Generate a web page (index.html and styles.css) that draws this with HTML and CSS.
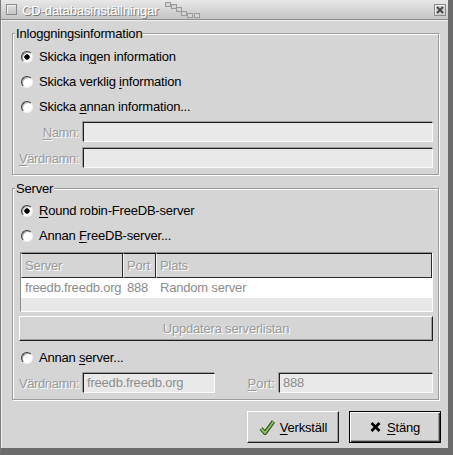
FILE: index.html
```html
<!DOCTYPE html>
<html lang="sv">
<head>
<meta charset="utf-8">
<title>CD-databasinställningar</title>
<link rel="stylesheet" href="styles.css">
</head>
<body>
<div class="window">
  <div class="titlebar">
    <span class="ticon"></span>
    <span class="ttext">CD-databasinställningar</span>
    <svg class="grip" width="40" height="17" viewBox="0 0 40 17">
      <g fill="#d4d4d4" stroke="#9a9a9a" stroke-width="1">
        <rect x="1.5" y="1.5" width="5" height="4"/>
        <rect x="7.5" y="3.5" width="5" height="4"/>
        <rect x="12.5" y="6.5" width="5" height="4"/>
        <rect x="17.5" y="10.5" width="5" height="4"/>
        <rect x="23.5" y="12.5" width="5" height="4"/>
        <rect x="30.5" y="12.5" width="5" height="4"/>
      </g>
    </svg>
    <span class="close">
      <svg width="8" height="8" viewBox="0 0 8 8"><path d="M1 1 L7 7 M7 1 L1 7" stroke="#4a4a4a" stroke-width="2"/></svg>
    </span>
  </div>
  <div class="client">
    <fieldset class="frame frame-login">
      <legend>Inloggningsinformation</legend>
      <div class="opt"><span class="radio on"></span><span>Skicka in<u>g</u>en information</span></div>
      <div class="opt"><span class="radio"></span><span>Skicka verklig <u>i</u>nformation</span></div>
      <div class="opt"><span class="radio"></span><span>Skicka <u>a</u>nnan information...</span></div>
      <div class="row row-first"><span class="lab dis"><span><u>N</u>amn:</span></span><span class="entry"></span></div>
      <div class="row row-next"><span class="lab dis"><span><u>V</u>ärdnamn:</span></span><span class="entry"></span></div>
    </fieldset>
    <fieldset class="frame frame-server">
      <legend>Server</legend>
      <div class="opt"><span class="radio on"></span><span><u>R</u>ound robin-FreeDB-server</span></div>
      <div class="opt"><span class="radio"></span><span>Annan <u>F</u>reeDB-server...</span></div>
      <div class="list">
        <div class="lhead">
          <span class="hc c1">Server</span><span class="hc c2">Port</span><span class="hc c3">Plats</span>
        </div>
        <div class="lrow">
          <span class="rc c1">freedb.freedb.org</span><span class="rc c2">888</span><span class="rc c3">Random server</span>
        </div>
      </div>
      <div class="wbtn dis">Uppdatera serverlistan</div>
      <div class="opt opt-spaced"><span class="radio"></span><span>Annan <u>s</u>erver...</span></div>
      <div class="row row-first">
        <span class="lab dis"><span>Värdnamn:</span></span>
        <span class="entry entry-host">freedb.freedb.org</span>
        <span class="lab lab-port dis"><span><u>P</u>ort:</span></span>
        <span class="entry">888</span>
      </div>
    </fieldset>
    <div class="actions">
      <div class="pbtn">
        <svg width="16" height="15" viewBox="0 0 16 15"><path d="M2 8.5 L6 13 L14.5 1.5" fill="none" stroke="#2f4a1f" stroke-width="4" stroke-linejoin="miter"/><path d="M2 8.5 L6 13 L14.5 1.5" fill="none" stroke="#86c45a" stroke-width="2"/></svg>
        <span><u>V</u>erkställ</span>
      </div>
      <div class="pbtn pbtn-default">
        <svg width="11" height="10" viewBox="0 0 11 10"><path d="M1.5 1 L9.5 9 M9.5 1 L1.5 9" stroke="#000" stroke-width="2.6"/></svg>
        <span><u>S</u>täng</span>
      </div>
    </div>
  </div>
</div>
</body>
</html>
```

FILE: styles.css
```css
html, body {
  margin: 0;
  padding: 0;
  background: #d5d5d5;
}

body {
  font-family: "Liberation Sans", Arial, sans-serif;
  font-size: 13px;
  letter-spacing: -0.2px;
  color: #000;
}

u {
  text-decoration: underline;
  text-underline-offset: 2px;
  text-decoration-thickness: 1px;
}

.window {
  box-sizing: border-box;
  width: 453px;
  height: 455px;
  display: flex;
  flex-direction: column;
  background: #d5d5d5;
  border-left: 1px solid #7c7c7c;
  border-right: 5px solid #6b6b6b;
  border-bottom: 7px solid #6b6b6b;
}

/* title bar */
.titlebar {
  height: 19px;
  flex: none;
  border-bottom: 1px solid #8c8c8c;
  background: linear-gradient(#e8e8e8, #c4c4c4);
  display: flex;
  align-items: center;
}

.ticon {
  width: 9px;
  height: 9px;
  margin-left: 5px;
  border: 1px solid #8a8a8a;
  background: linear-gradient(#dcdcdc, #c6c6c6);
  box-shadow: inset 1px 1px 0 #f2f2f2;
}

.ttext {
  margin-left: 5px;
  padding-top: 1px;
  color: #fff;
  text-shadow: 1px 1px 0 #7a7a7a;
  letter-spacing: -0.1px;
}

.grip {
  margin-left: 6px;
  align-self: flex-start;
  margin-top: 1px;
}

.close {
  margin-left: auto;
  margin-right: 2px;
  width: 10px;
  height: 10px;
  border: 1px solid #8c8c8c;
  background: #cfcfcf;
  box-shadow: inset 1px 1px 0 #eee;
  display: flex;
  align-items: center;
  justify-content: center;
}

/* client area */
.client {
  flex: 1;
  display: flex;
  flex-direction: column;
  border-left: 1px solid #efefef;
  border-top: 1px solid #ececec;
  padding: 5px 9px 0 10px;
}

.frame {
  margin: 0;
  min-width: 0;
  padding: 3px 5px 6px 8px;
  border: 1px solid #9c9c9c;
  box-shadow: 1px 1px 0 #fff, inset 1px 1px 0 #fff;
}

.frame legend {
  padding: 0 1px;
  margin-left: -6px;
  line-height: 15px;
  background: #d5d5d5;
}

.frame-server {
  margin-top: 6px;
}

.opt {
  display: flex;
  align-items: center;
  height: 25px;
}

.frame-server > .opt:first-of-type {
  margin-top: -1px;
}

.opt-spaced {
  margin-top: 4px;
}

.radio {
  flex: none;
  width: 10px;
  height: 10px;
  margin-right: 6px;
  border: 1px solid;
  border-color: #3a3a3a #f0f0f0 #f0f0f0 #3a3a3a;
  border-radius: 50%;
  background: #fff;
  box-shadow: inset 1px 1px 0 #a6a6a6;
}

.radio.on {
  background: radial-gradient(circle at 50% 50%, #000 0, #000 2.4px, #fff 3px);
}

.row {
  display: flex;
  align-items: center;
}

.row-first {
  margin-top: 3px;
}

.row-next {
  margin-top: 6px;
}

.lab {
  flex: none;
  box-sizing: border-box;
  width: 62px;
  padding-right: 4px;
  display: flex;
  justify-content: flex-end;
  white-space: nowrap;
  letter-spacing: -0.4px;
}

.lab > span {
  flex: none;
}

.lab-port {
  width: 64px;
  letter-spacing: 0;
}

.dis {
  color: #9b9b9b;
  text-shadow: 1px 1px 0 #fff;
}

.entry {
  flex: 1;
  min-width: 0;
  height: 18px;
  line-height: 18px;
  padding-left: 3px;
  border: 1px solid;
  border-color: #202020 #fafafa #fafafa #202020;
  background: #e9e9e9;
  box-shadow: -1px -1px 0 #9c9c9c;
  color: #8e8e8e;
  white-space: nowrap;
}

.entry-host {
  flex: none;
  width: 127px;
}

/* server list */
.list {
  box-sizing: border-box;
  height: 60px;
  margin: 4px 0 0 -1px;
  border: 1px solid;
  border-color: #8e8e8e #fdfdfd #fdfdfd #8e8e8e;
  background: #e8e8e8;
  display: flex;
  flex-direction: column;
}

.lhead {
  display: flex;
  height: 25px;
  background: #d5d5d5;
}

.hc {
  box-sizing: border-box;
  height: 25px;
  line-height: 23px;
  padding-left: 3px;
  border-top: 1px solid #111;
  border-bottom: 1px solid #2a2a2a;
  border-left: 1px solid #f4f4f4;
  border-right: 1px solid #2a2a2a;
  color: #9b9b9b;
  text-shadow: 1px 1px 0 #fff;
}

.c1 { width: 102px; flex: none; }
.c2 { width: 33px; flex: none; }
.c3 { flex: 1; }

.lrow {
  display: flex;
  height: 20px;
  background: #fff;
}

.rc {
  box-sizing: border-box;
  line-height: 20px;
  padding-left: 4px;
  color: #8c8c8c;
}

.wbtn {
  box-sizing: border-box;
  height: 25px;
  margin: 4px 0 0 -2px;
  border: 1px solid;
  border-color: #fff #1e1e1e #1e1e1e #fff;
  box-shadow: inset -1px -1px 0 #a0a0a0;
  display: flex;
  align-items: center;
  justify-content: center;
}

/* dialog buttons */
.actions {
  display: flex;
  justify-content: flex-end;
  gap: 10px;
  margin: 11px -2px 0 0;
}

.pbtn {
  box-sizing: border-box;
  width: 92px;
  height: 32px;
  display: flex;
  align-items: center;
  justify-content: center;
  gap: 5px;
  border: 1px solid;
  border-color: #fff #1e1e1e #1e1e1e #fff;
  box-shadow: inset -1px -1px 0 #9a9a9a;
}

.pbtn-default {
  gap: 6px;
  border-color: #000;
  box-shadow: inset 1px 1px 0 #fff, inset -1px -1px 0 #3a3a3a, inset -2px -2px 0 #9a9a9a;
}
```
